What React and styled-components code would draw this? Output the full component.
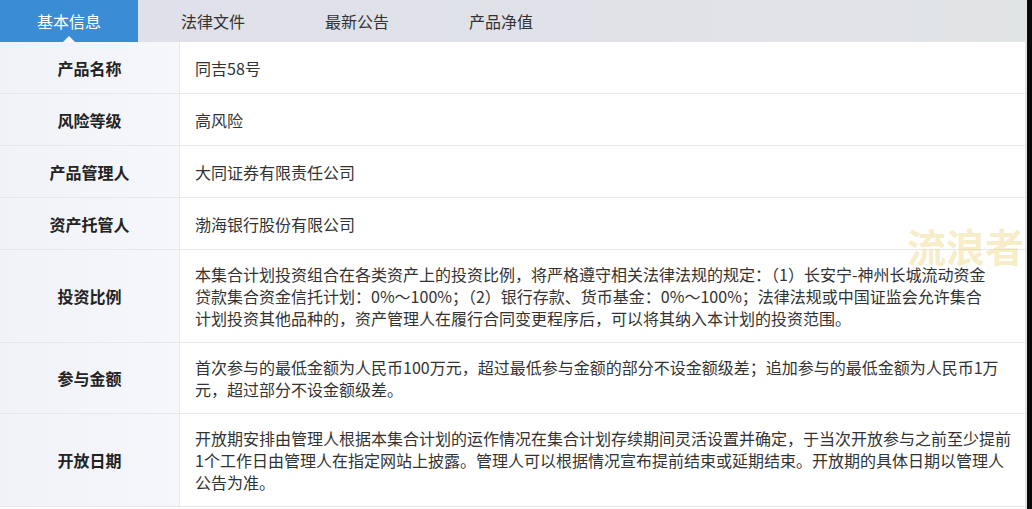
import React from "react";
import styled, { createGlobalStyle } from "styled-components";

const Global = createGlobalStyle`
  html, body { margin: 0; padding: 0; background: #0a0a0a; }
  body { font-family: "Noto Sans CJK SC", "Microsoft YaHei", sans-serif; }
`;

const Page = styled.div`
  position: relative;
  width: 1027px;
  height: 509px;
  overflow: hidden;
  background: #ffffff;
  border-right: 2px solid #e2e3e6;
  box-sizing: border-box;
`;

const TabBar = styled.div`
  display: flex;
  gap: 6px;
  height: 42px;
  background: linear-gradient(90deg, #dfe0ea 0%, #e0e2e8 60%, #e1e4e5 100%);
`;

const Tab = styled.div`
  position: relative;
  width: 138px;
  display: flex;
  align-items: center;
  justify-content: center;
  font-size: 16px;
  color: ${(p) => (p.$active ? "#ffffff" : "#333333")};
  background: ${(p) => (p.$active ? "#3a8cd4" : "transparent")};

  &::after {
    content: "";
    display: ${(p) => (p.$active ? "block" : "none")};
    position: absolute;
    left: 50%;
    bottom: 0;
    transform: translateX(-50%);
    border-left: 6px solid transparent;
    border-right: 6px solid transparent;
    border-bottom: 6px solid #f8f9fc;
  }
`;

const Table = styled.div`
  display: flex;
  flex-direction: column;
`;

const Row = styled.div`
  display: grid;
  grid-template-columns: 180px 1fr;
  min-height: 51px;
  border-bottom: 1px solid #e6e7ea;
`;

const Label = styled.div`
  display: flex;
  align-items: center;
  justify-content: center;
  background: linear-gradient(90deg, #f1f2f8 0%, #f5f7fb 100%);
  border-right: 1px solid #e8eaef;
  font-size: 16px;
  font-weight: 700;
  color: #222;
`;

const Value = styled.div`
  display: flex;
  flex-direction: column;
  justify-content: center;
  padding: 13px 0 13px 15px;
  font-size: 16px;
  line-height: 22px;
  color: #333;
  white-space: nowrap;
`;

const Line = styled.span`
  display: block;
`;

const Watermark = styled.div`
  position: absolute;
  left: 907px;
  top: 226px;
  font-size: 39px;
  line-height: 1;
  font-weight: 700;
  color: rgba(236, 212, 120, 0.42);
  pointer-events: none;
`;

const tabs = ["基本信息", "法律文件", "最新公告", "产品净值"];

const rows = [
  { label: "产品名称", lines: ["同吉58号"] },
  { label: "风险等级", lines: ["高风险"] },
  { label: "产品管理人", lines: ["大同证券有限责任公司"] },
  { label: "资产托管人", lines: ["渤海银行股份有限公司"] },
  {
    label: "投资比例",
    lines: [
      "本集合计划投资组合在各类资产上的投资比例，将严格遵守相关法律法规的规定：（1）长安宁-神州长城流动资金",
      "贷款集合资金信托计划：0%～100%；（2）银行存款、货币基金：0%～100%；法律法规或中国证监会允许集合",
      "计划投资其他品种的，资产管理人在履行合同变更程序后，可以将其纳入本计划的投资范围。",
    ],
  },
  {
    label: "参与金额",
    lines: [
      "首次参与的最低金额为人民币100万元，超过最低参与金额的部分不设金额级差；追加参与的最低金额为人民币1万",
      "元，超过部分不设金额级差。",
    ],
  },
  {
    label: "开放日期",
    lines: [
      "开放期安排由管理人根据本集合计划的运作情况在集合计划存续期间灵活设置并确定，于当次开放参与之前至少提前",
      "1个工作日由管理人在指定网站上披露。管理人可以根据情况宣布提前结束或延期结束。开放期的具体日期以管理人",
      "公告为准。",
    ],
  },
];

export default function App() {
  return (
    <>
      <Global />
      <Page>
        <TabBar>
          {tabs.map((t, i) => (
            <Tab key={t} $active={i === 0}>
              {t}
            </Tab>
          ))}
        </TabBar>
        <Table>
          {rows.map((r) => (
            <Row key={r.label}>
              <Label>{r.label}</Label>
              <Value>
                {r.lines.map((l, i) => (
                  <Line key={i}>{l}</Line>
                ))}
              </Value>
            </Row>
          ))}
        </Table>
        <Watermark>流浪者</Watermark>
      </Page>
    </>
  );
}
